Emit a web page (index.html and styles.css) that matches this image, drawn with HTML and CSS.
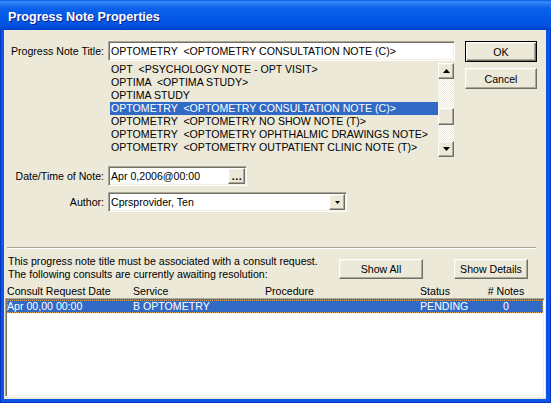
FILE: index.html
```html
<!DOCTYPE html>
<html>
<head>
<meta charset="utf-8">
<title>Progress Note Properties</title>
<link rel="stylesheet" href="styles.css">
</head>
<body>
<div class="window">
  <div class="titlebar"><span class="title">Progress Note Properties</span></div>
  <div class="frame">
    <div class="client">
      <div class="top">
        <div class="form">
          <div class="lbl lbl-title">Progress Note Title:</div>
          <div class="title-field">
            <div class="edit title-edit">OPTOMETRY  &lt;OPTOMETRY CONSULTATION NOTE (C)&gt;</div>
            <div class="listbox">
              <ul class="items">
                <li>OPT  &lt;PSYCHOLOGY NOTE - OPT VISIT&gt;</li>
                <li>OPTIMA  &lt;OPTIMA STUDY&gt;</li>
                <li>OPTIMA STUDY</li>
                <li class="sel">OPTOMETRY  &lt;OPTOMETRY CONSULTATION NOTE (C)&gt;</li>
                <li>OPTOMETRY  &lt;OPTOMETRY NO SHOW NOTE (T)&gt;</li>
                <li>OPTOMETRY  &lt;OPTOMETRY OPHTHALMIC DRAWINGS NOTE&gt;</li>
                <li>OPTOMETRY  &lt;OPTOMETRY OUTPATIENT CLINIC NOTE (T)&gt;</li>
              </ul>
              <div class="vscroll">
                <div class="btn sbtn"><svg width="7" height="4" viewBox="0 0 7 4"><path d="M3.5 0L7 4H0z" fill="#000"/></svg></div>
                <div class="track"><div class="btn thumb"></div></div>
                <div class="btn sbtn"><svg width="7" height="4" viewBox="0 0 7 4"><path d="M0 0h7L3.5 4z" fill="#000"/></svg></div>
              </div>
            </div>
          </div>
          <div class="lbl lbl-date">Date/Time of Note:</div>
          <div class="edit date-edit"><span class="val">Apr 0,2006@00:00</span><span class="btn dots">...</span></div>
          <div class="lbl lbl-author">Author:</div>
          <div class="edit combo"><span class="val">Cprsprovider, Ten</span><span class="btn drop"><svg width="5" height="3" viewBox="0 0 5 3"><path d="M0 0h5L2.5 3z" fill="#000"/></svg></span></div>
        </div>
        <div class="buttons">
          <div class="btn default ok">OK</div>
          <div class="btn cancel">Cancel</div>
        </div>
      </div>
      <div class="sep"></div>
      <div class="msgrow">
        <div class="msg">This progress note title must be associated with a consult request.<br>The following consults are currently awaiting resolution:</div>
        <div class="btn showall">Show All</div>
        <div class="btn showdetails">Show Details</div>
      </div>
      <div class="cols">
        <span>Consult Request Date</span>
        <span>Service</span>
        <span>Procedure</span>
        <span>Status</span>
        <span class="num">#&nbsp;Notes</span>
      </div>
      <div class="list">
        <div class="row selected">
          <span>Apr 00,00 00:00</span>
          <span>B OPTOMETRY</span>
          <span></span>
          <span>PENDING</span>
          <span class="num">0</span>
        </div>
      </div>
    </div>
  </div>
</div>
</body>
</html>
```

FILE: styles.css
```css
* { box-sizing: border-box; }

html, body {
  margin: 0;
  padding: 0;
}

body {
  width: 551px;
  height: 403px;
  overflow: hidden;
  background: #0a4fdc;
  font-family: "Liberation Sans", Arial, sans-serif;
  font-size: 10.6px;
  color: #000;
}

.window {
  width: 551px;
  height: 403px;
  display: flex;
  flex-direction: column;
}

.titlebar {
  height: 30px;
  flex: none;
  display: flex;
  align-items: center;
  padding-left: 8px;
  background: linear-gradient(to bottom,
    #0a5ae4 0px, #3a8cfa 2px, #2878f4 4px, #0d62ec 8px,
    #0459e8 16px, #0454e2 24px, #0249d6 28px, #003dc8 30px);
}

.title {
  color: #fff;
  font-weight: bold;
  font-size: 12.6px;
  text-shadow: 1px 1px 0 #0a1f8a;
  margin-top: 3px;
}

.frame {
  flex: 1;
  display: flex;
  padding: 0 5px 4px 4px;
  background: #0c55e6;
  box-shadow: inset 1px 0 #0035c0, inset -1px 0 #0035c0, inset 0 -1px #0035c0;
}

.client {
  flex: 1;
  display: flex;
  flex-direction: column;
  background: #ece9d8;
}

/* ---------- generic controls ---------- */
.btn {
  border: 1px solid;
  border-color: #fff #716f64 #716f64 #fff;
  box-shadow: inset -1px -1px #aca899, inset 1px 1px #f1efe2;
  background: #ece9d8;
  display: flex;
  align-items: center;
  justify-content: center;
}

.btn.default {
  border-color: #000;
  box-shadow: inset 1px 1px #fff, inset -1px -1px #716f64, inset -2px -2px #aca899, inset 2px 2px #f1efe2;
}

.edit {
  border: 1px solid;
  border-color: #aca899 #fff #fff #aca899;
  box-shadow: inset 1px 1px #716f64, inset -1px -1px #f1efe2;
  background: #fff;
  padding: 1px 1px 1px 2px;
  white-space: pre;
}

/* ---------- top section ---------- */
.top {
  display: flex;
  padding: 11px 9px 0 0;
}

.form {
  display: grid;
  grid-template-columns: 100px auto;
  column-gap: 4px;
  align-items: start;
  justify-items: start;
}

.lbl {
  justify-self: end;
  height: 20px;
  line-height: 20px;
  white-space: nowrap;
}

.title-field {
  width: 347px;
  display: flex;
  flex-direction: column;
  gap: 1px;
}

.title-edit {
  height: 20px;
  line-height: 16px;
}

.listbox {
  height: 96px;
  display: flex;
  padding: 1px 1px 1px 2px;
}

.items {
  flex: 1;
  list-style: none;
  margin: 0;
  padding: 0;
}

.items li {
  height: 13px;
  line-height: 13px;
  padding-left: 1px;
  white-space: pre;
}

.items li.sel {
  background: #316ac5;
  color: #fff;
}

.vscroll {
  width: 16px;
  display: flex;
  flex-direction: column;
}

.sbtn {
  height: 16px;
  flex: none;
}

.track {
  flex: 1;
  padding-top: 29px;
  background-image: conic-gradient(#ece9d8 0 25%, #fff 0 50%, #ece9d8 0 75%, #fff 0);
  background-size: 2px 2px;
}

.thumb {
  height: 17px;
}

.lbl-date, .date-edit { margin-top: 8px; }
.lbl-author, .combo { margin-top: 6px; }

.date-edit {
  width: 139px;
  height: 20px;
  display: flex;
  justify-content: space-between;
  padding: 1px 1px 1px 1px;
  line-height: 16px;
}

.date-edit .val { padding-left: 1px; }

.dots {
  width: 17px;
  height: 16px;
  font-weight: bold;
  letter-spacing: 0.5px;
  line-height: 10px;
  padding-left: 1px;
}

.combo {
  width: 239px;
  height: 20px;
  display: flex;
  justify-content: space-between;
  padding: 1px;
  line-height: 16px;
}

.combo .val { padding-left: 1px; }

.drop {
  width: 16px;
  height: 16px;
}

.buttons {
  margin-left: 10px;
  display: flex;
  flex-direction: column;
  gap: 6px;
}

.ok, .cancel {
  width: 72px;
  height: 21px;
}

/* ---------- separator & consult section ---------- */
.sep {
  height: 2px;
  margin: 35px 10px 0 3px;
  border-top: 1px solid #aca899;
  border-bottom: 1px solid #fff;
}

.msgrow {
  display: flex;
  align-items: flex-start;
  margin-top: 6px;
  padding-left: 4px;
}

.msg {
  line-height: 13px;
  white-space: nowrap;
}

.showall {
  margin-left: auto;
  margin-top: 4px;
  width: 84px;
  height: 20px;
}

.showdetails {
  margin-left: 31px;
  margin-right: 18px;
  margin-top: 4px;
  width: 74px;
  height: 20px;
}

.cols, .row {
  display: grid;
  grid-template-columns: 126px 132px 155px 67px 38px;
  height: 13px;
  line-height: 13px;
  white-space: nowrap;
}

.cols {
  margin-top: 4px;
  padding-left: 3px;
}

.num { text-align: center; }

.list {
  flex: 1;
  margin: 0 1px 2px 1px;
  border: 1px solid;
  border-color: #aca899 #fff #fff #aca899;
  box-shadow: inset 1px 1px #716f64, inset -1px -1px #f1efe2;
  background: #fff;
  padding: 1px;
}

.row.selected {
  background: #316ac5;
  color: #fff;
  outline: 1px dotted #e0a050;
  outline-offset: -1px;
}
```
